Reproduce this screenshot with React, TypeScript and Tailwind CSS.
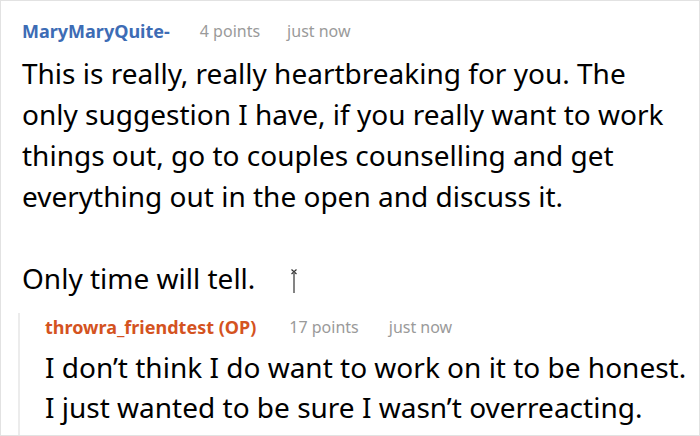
export default function App() {
  return (
    <div
      className="w-[700px] h-[436px] overflow-hidden border border-[#e2e2e2] bg-white text-black"
      style={{ fontFamily: '"Noto Sans", "Open Sans", sans-serif' }}
    >
      <div className="pl-[21px] pt-[19px]">
        {/* comment header */}
        <div className="flex items-center h-[22px] text-[16px]">
          <span className="font-bold text-[18px] text-[#3d6cb5]">MaryMaryQuite-</span>
          <span className="ml-[30px] text-[#9a9a9a]">4 points</span>
          <span className="ml-[27px] text-[#9a9a9a]">just now</span>
        </div>
        <div className="mt-[11px] text-[28px] leading-[41px] whitespace-nowrap">
          <p>
            This is really, really heartbreaking for you. The
            <br />
            only suggestion I have, if you really want to work
            <br />
            things out, go to couples counselling and get
            <br />
            everything out in the open and discuss it.
          </p>
          <p className="mt-[41px] flex items-center">
            Only time will tell.
            {/* text cursor */}
            <svg width="8" height="26" viewBox="0 0 8 26" className="ml-[35px] mt-[4px]">
              <path d="M1.5 1.5 L6.5 6 M6.5 1.5 L1.5 6" stroke="#333" strokeWidth="1.2" />
              <rect x="3.2" y="4" width="1.6" height="21" fill="#666" />
            </svg>
          </p>
        </div>
        {/* reply */}
        <div className="mt-[14px] ml-[-4px] border-l-2 border-[#ececec] pl-[25px] pb-[8px]">
          <div className="flex items-center h-[22px] pt-[6px] text-[16px]">
            <span className="font-bold text-[18px] text-[#d4531f]">throwra_friendtest (OP)</span>
            <span className="ml-[33px] text-[#9a9a9a]">17 points</span>
            <span className="ml-[30px] text-[#9a9a9a]">just now</span>
          </div>
          <div className="mt-[12px] text-[28px] leading-[40px] whitespace-nowrap">
            <p>I don’t think I do want to work on it to be honest.</p>
            <p>I just wanted to be sure I wasn’t overreacting.</p>
          </div>
        </div>
      </div>
    </div>
  );
}
